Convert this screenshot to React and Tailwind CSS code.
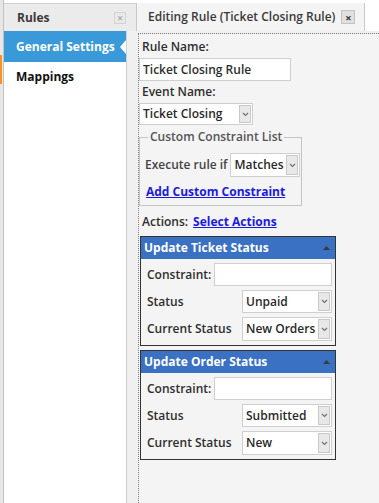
import React from "react";

function Chevron() {
  return (
    <svg width="7" height="5" viewBox="0 0 7 5">
      <path d="M1 1l2.5 2.5L6 1" fill="none" stroke="#707070" strokeWidth="1.1" />
    </svg>
  );
}

function Select({ value, className }) {
  return (
    <div className={`flex items-stretch border border-[#cfcfcf] bg-white ${className}`}>
      <span className="flex flex-1 items-center truncate whitespace-nowrap pl-[3px] font-semibold text-[#2a2a2a]">{value}</span>
      <span className="my-px mr-px flex w-[12px] items-center justify-center border border-[#c9c9c9] bg-[#e8e8e8]">
        <Chevron />
      </span>
    </div>
  );
}

function ActionPanel({ title, status, current }) {
  return (
    <div className="ml-px w-[196px] border border-[#333]">
      <div className="flex h-[22px] items-center justify-between bg-[#3b71c3] pl-[3px] pr-[5px] font-bold text-white">
        <span>{title}</span>
        <svg width="7" height="4" viewBox="0 0 7 4">
          <path d="M0 4L3.5 0L7 4z" fill="#3a3a3a" />
        </svg>
      </div>
      <div className="flex flex-col gap-[4px] pb-[4px] pl-[6px] pr-[3px] pt-[4px]">
        <div className="flex h-[23px] items-center justify-between">
          <span className="font-semibold">Constraint:</span>
          <div className="h-[23px] w-[118px] border border-[#cfcfcf] bg-white" />
        </div>
        <div className="flex h-[23px] items-center justify-between">
          <span className="font-semibold">Status</span>
          <Select value={status} className="h-[23px] w-[90px]" />
        </div>
        <div className="flex h-[24px] items-center justify-between">
          <span className="font-semibold">Current Status</span>
          <Select value={current} className="h-[24px] w-[90px]" />
        </div>
      </div>
    </div>
  );
}

export default function App() {
  return (
    <div className="flex h-[503px] w-[379px] overflow-hidden whitespace-nowrap bg-[#f4f4f4] font-['Open_Sans',sans-serif] text-[12px] leading-none text-[#2e2e2e]">
      {/* left edge strip */}
      <div className="w-[4px] border-r border-[#c2c2c2] bg-[#e7e7e7]">
        <div className="mt-[55px] h-[29px] w-[2px] bg-[#f7941d]" />
      </div>

      {/* rules sidebar */}
      <div className="flex w-[123px] flex-col bg-white">
        <div className="mt-[3px] flex h-[28px] items-center justify-between border-t border-[#cfcfcf] bg-[#ebebeb] pl-[13px] pr-[1px]">
          <span className="font-bold text-[#3a3a3a]">Rules</span>
          <span className="flex h-[12px] w-[12px] items-center justify-center border border-[#d2d2d2] bg-[#e9e9e9] text-[10px] text-[#999]">
            ×
          </span>
        </div>
        <div className="flex flex-1 border-r border-[#cfcfcf]">
          <div className="flex flex-1 flex-col">
            <div className="flex h-[31px] items-center justify-between bg-[#3a9ad9] pl-[12px]">
              <span className="font-bold text-white">General Settings</span>
              <svg width="6" height="14" viewBox="0 0 6 14">
                <path d="M6 0L0 7L6 14z" fill="#fff" />
              </svg>
            </div>
            <div className="flex h-[29px] items-center pl-[12px] font-bold text-[#111]">Mappings</div>
          </div>
        </div>
      </div>

      {/* editor */}
      <div className="flex flex-1 flex-col">
        <div className="flex h-[31px] bg-white">
          <div className="mt-[3px] w-[9px] border-t border-[#cfcfcf] bg-[#ebebeb]" />
          <div className="mt-[3px] flex w-[229px] items-center border-r border-l border-[#c8c8c8] bg-[#f4f4f4] pl-[11px]">
            <span className="font-semibold text-[#3a3a3a]">Editing Rule (Ticket Closing Rule)</span>
            <span className="ml-[6px] flex h-[14px] w-[14px] items-center justify-center border border-[#c2c2c2] bg-[#e0e0e0] text-[11px] font-bold text-[#333]">
              ×
            </span>
          </div>
          <div className="flex-1" />
        </div>
        <div className="flex flex-1 bg-[#f0f0f0] pl-[11px] pt-[2px]">
          <div className="flex flex-1 flex-col border-l border-t border-dotted border-[#7a7a7a] bg-[#f4f4f4]">
            <div className="flex h-[24px] items-center pl-[3px] pt-px font-semibold">Rule Name:</div>
            <div className="flex h-[23px] w-[152px] items-center border border-[#cfcfcf] bg-white pl-[3px] font-semibold">
              Ticket Closing Rule
            </div>
            <div className="flex h-[22px] items-center pl-[3px] font-semibold">Event Name:</div>
            <Select value="Ticket Closing" className="h-[22px] w-[114px]" />

            <fieldset className="mt-[6px] w-[163px] border border-[#c4c4c4] pb-[5px] pl-[5px] pt-[10px]">
              <legend className="ml-[3px] px-[2px] font-semibold text-[#555]">Custom Constraint List</legend>
              <div className="flex items-center gap-[3px]">
                <span className="font-semibold text-[#444]">Execute rule if</span>
                <Select value="Matches" className="h-[24px] w-[70px]" />
              </div>
              <div className="mt-[6px] flex h-[17px] items-center pl-px font-bold text-[#1a1ae0] underline">
                Add Custom Constraint
              </div>
            </fieldset>

            <div className="mt-[7px] flex h-[18px] items-center gap-[5px] pl-[3px]">
              <span className="font-semibold">Actions:</span>
              <span className="font-bold text-[#1a1ae0] underline">Select Actions</span>
            </div>

            <div className="mt-[5px] flex flex-col gap-[4px]">
              <ActionPanel title="Update Ticket Status" status="Unpaid" current="New Orders" />
              <ActionPanel title="Update Order Status" status="Submitted" current="New" />
            </div>
          </div>
        </div>
      </div>
    </div>
  );
}
